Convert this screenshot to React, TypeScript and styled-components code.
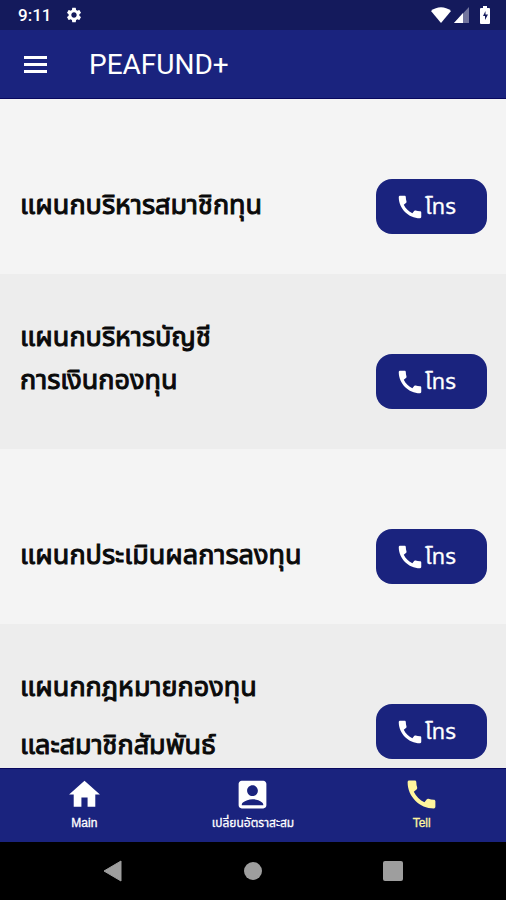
import React from "react";
import styled, { createGlobalStyle } from "styled-components";
import { MdAccountBox, MdCall, MdHome, MdSettings } from "react-icons/md";

const NAVY = "#1a237e";
const THAI = `"Liberation Sans", "Noto Sans Thai", "Noto Sans", sans-serif`;

const GlobalStyle = createGlobalStyle`
  * { box-sizing: border-box; }
  body { margin: 0; font-family: ${THAI}; }
  button { border: 0; padding: 0; margin: 0; background: none; color: inherit; font: inherit; cursor: pointer; }
  svg { display: block; flex: none; }
`;

const Screen = styled.div`
  display: flex;
  flex-direction: column;
  height: 100vh;
  overflow: hidden;
  background: #f4f4f4;
`;

const StatusBar = styled.div`
  flex: none;
  display: flex;
  align-items: center;
  justify-content: space-between;
  height: 30px;
  padding: 0 16px 0 18px;
  background: #141a5c;
  color: #fff;
`;

const StatusGroup = styled.div<{ $gap: number }>`
  display: flex;
  align-items: center;
  gap: ${(p) => p.$gap}px;
`;

const Clock = styled.span`
  font: 500 17px/30px Roboto, sans-serif;
`;

const AppBar = styled.header`
  flex: none;
  display: flex;
  align-items: center;
  gap: 39px;
  height: 69px;
  padding: 2px 20px 0;
  background: ${NAVY};
  border-bottom: 1px solid #08085e;
  color: #fff;
`;

const Title = styled.h1`
  margin: 0;
  font: 400 28px/36px Roboto, sans-serif;
`;

const List = styled.main`
  flex: 1;
  min-height: 0;
  overflow: hidden;
`;

const Row = styled.section`
  display: flex;
  align-items: flex-start;
  justify-content: space-between;
  height: 175px;
  padding: 0 19px 0 20px;
  background: #f4f4f4;

  &:nth-child(even) {
    background: #ededed;
  }
`;

const Label = styled.h2<{ $top: number; $line: number }>`
  margin: 0;
  padding-top: ${(p) => p.$top}px;
  color: #0a0a0a;
  font: 400 27px/${(p) => p.$line}px ${THAI};
  -webkit-text-stroke: 1px currentColor;
  white-space: pre-line;
`;

const CallButton = styled.button`
  flex: none;
  display: flex;
  align-items: center;
  justify-content: center;
  width: 111px;
  height: 55px;
  margin-top: 80px;
  padding-right: 12px;
  border-radius: 16px;
  background: ${NAVY};
  color: #fff;
  font: 400 22px/32px ${THAI};
  -webkit-text-stroke: 0.3px currentColor;
`;

const TabBar = styled.nav`
  flex: none;
  display: grid;
  grid-template-columns: repeat(3, 1fr);
  height: 74px;
  background: ${NAVY};
  border-top: 1px solid #08085e;
`;

const Tab = styled.button<{ $active?: boolean }>`
  display: flex;
  flex-direction: column;
  align-items: center;
  padding-top: 7px;
  color: ${(p) => (p.$active ? "#fff59d" : "#fff")};
  font: 400 12px/16px ${THAI};
  -webkit-text-stroke: 0.3px currentColor;
  white-space: nowrap;

  svg {
    margin-bottom: 2px;
  }
`;

const SystemBar = styled.div`
  flex: none;
  display: flex;
  align-items: center;
  justify-content: center;
  gap: 120px;
  height: 58px;
  background: #000;
  color: #9e9e9e;
`;

const rows = [
  { text: "แผนกบริหารสมาชิกทุน", top: 85, line: 43 },
  { text: "แผนกบริหารบัญชี\nการเงินกองทุน", top: 42, line: 43 },
  { text: "แผนกประเมินผลการลงทุน", top: 85, line: 43 },
  { text: "แผนกกฎหมายกองทุน\nและสมาชิกสัมพันธ์", top: 34, line: 58 },
];

export default function App() {
  return (
    <Screen>
      <GlobalStyle />
      <StatusBar>
        <StatusGroup $gap={14}>
          <Clock>9:11</Clock>
          <MdSettings size={18} />
        </StatusGroup>
        <StatusGroup $gap={3}>
          <svg width="20" height="16" viewBox="0 0 20 16" fill="currentColor">
            <path d="M0 4C6-1 14-1 20 4L10 16Z" />
          </svg>
          <svg width="15" height="16" viewBox="0 0 15 16" fill="currentColor">
            <path d="M15 0v16H0Z" opacity=".4" />
            <path d="M9 6v10H0Z" />
          </svg>
          <svg width="18" height="18" viewBox="0 0 18 18">
            <path d="M9 2h2V0h4v2h2a1 1 0 0 1 1 1v14a1 1 0 0 1-1 1H9a1 1 0 0 1-1-1V3a1 1 0 0 1 1-1Z" fill="#fff" />
            <path d="M13.500 5l-2.500 5h2v4l3-5.500h-2.500Z" fill="#141a5c" />
          </svg>
        </StatusGroup>
      </StatusBar>
      <AppBar>
        <button aria-label="Menu">
          <svg width="30" height="30" viewBox="0 0 30 30" fill="currentColor">
            <path d="M4 6h23v3H4zM4 13h23v3H4zM4 20h23v3H4z" />
          </svg>
        </button>
        <Title>PEAFUND+</Title>
      </AppBar>
      <List>
        {rows.map((row) => (
          <Row key={row.text}>
            <Label $top={row.top} $line={row.line}>
              {row.text}
            </Label>
            <CallButton>
              <MdCall size={30} />
              โทร
            </CallButton>
          </Row>
        ))}
      </List>
      <TabBar>
        <Tab>
          <MdHome size={37} />
          Main
        </Tab>
        <Tab>
          <MdAccountBox size={37} />
          เปลี่ยนอัตราสะสม
        </Tab>
        <Tab $active aria-current="page">
          <MdCall size={37} />
          Tell
        </Tab>
      </TabBar>
      <SystemBar>
        <button aria-label="Back">
          <svg width="20" height="22" viewBox="0 0 20 22" fill="currentColor">
            <path d="M18 1v20L1 11Z" stroke="currentColor" strokeLinejoin="round" />
          </svg>
        </button>
        <button aria-label="Home">
          <svg width="20" height="20" viewBox="0 0 20 20" fill="currentColor">
            <circle cx="10" cy="10" r="9" />
          </svg>
        </button>
        <button aria-label="Recent apps">
          <svg width="20" height="20" viewBox="0 0 20 20" fill="currentColor">
            <rect width="20" height="20" rx="2" />
          </svg>
        </button>
      </SystemBar>
    </Screen>
  );
}
